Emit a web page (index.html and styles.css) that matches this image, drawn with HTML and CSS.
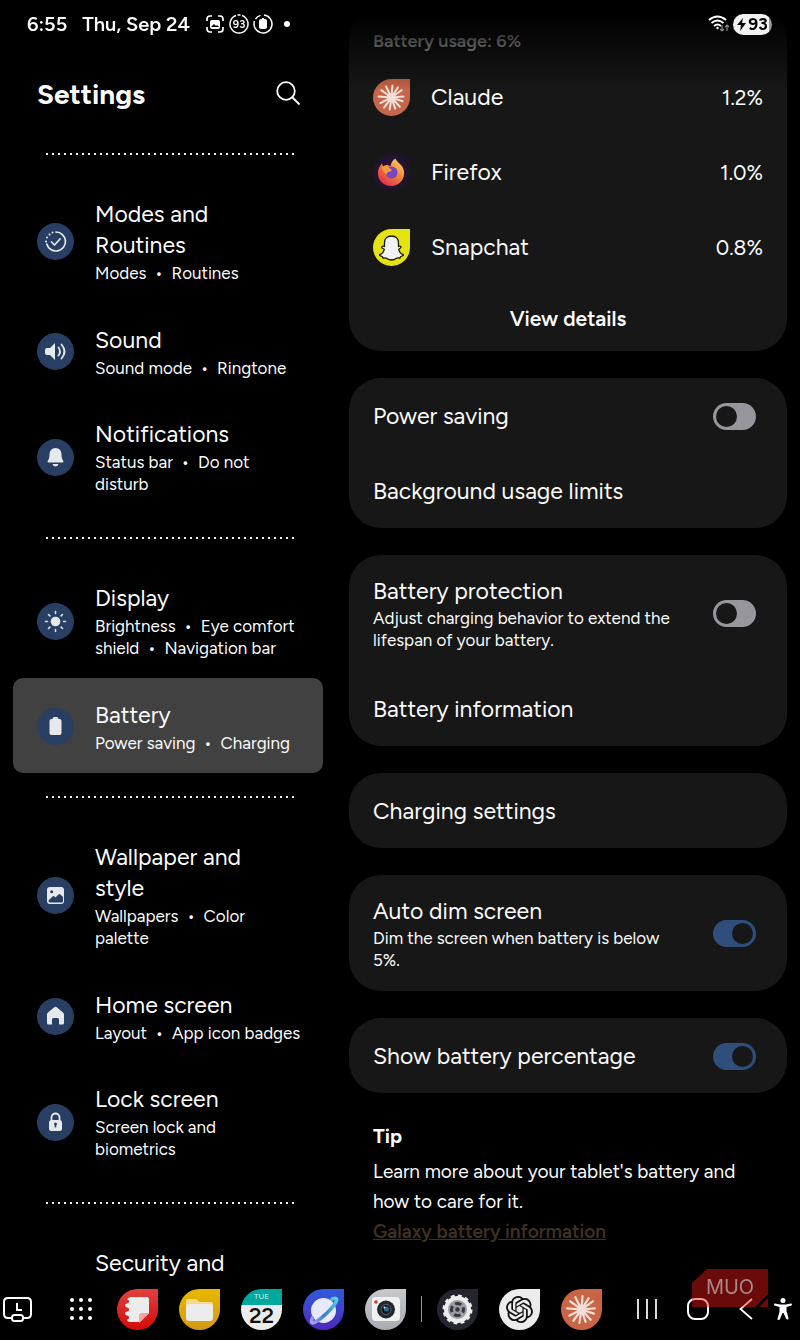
FILE: index.html
```html
<!DOCTYPE html>
<html lang="en">
<head>
    <meta charset="UTF-8">
    <meta name="viewport" content="width=device-width, initial-scale=1.0">
    <title>Settings</title>
    <link rel="stylesheet" href="styles.css">
</head>
<body>
    <!-- burst shared by the two Claude icons -->
    <svg class="defs" width="0" height="0" aria-hidden="true">
        <symbol id="burst" viewBox="0 0 40 40">
            <g stroke-width="2.2" stroke-linecap="round">
                <path d="M20 20 21 7M20 20 27 9M20 20 31 12M20 20 33 19M20 20 32 24M20 20 29 30M20 20 24 32M20 20 18 33M20 20 12 31M20 20 8 26M20 20 6 19M20 20 9 12M20 20 14 8"/>
            </g>
            <circle cx="20" cy="20" r="4"/>
        </symbol>
    </svg>

    <header class="status-bar">
        <span>6:55</span>
        <span class="date">Thu, Sep 24</span>
        <div class="status-icons">
            <svg width="20" height="20" viewBox="0 0 20 20" fill="none" stroke="#fff" stroke-width="1.7">
                <path d="M2 7V5q0-3 3-3h2M13 2h2q3 0 3 3v2M18 13v2q0 3-3 3h-2M7 18H5q-3 0-3-3v-2"/>
                <rect x="5" y="6" width="10" height="9" rx="2" fill="#fff" stroke="none"/>
                <path d="M6 13l3-3 2 2 1-1 2 2z" fill="#000" stroke="none"/>
            </svg>
            <svg width="20" height="20" viewBox="0 0 20 20" fill="none" stroke="#fff" stroke-width="1.5">
                <path d="M13 1.5a9 9 0 1 1-6 0M8.5 1.1h3"/>
                <text class="ring-text" x="10" y="14" text-anchor="middle">93</text>
            </svg>
            <svg width="20" height="20" viewBox="0 0 20 20" fill="none" stroke="#fff" stroke-width="1.5">
                <path d="M11 1a9 9 0 1 1-9.5 6M2.5 5a9 9 0 0 1 5-3.6"/>
                <path d="M8 5h1V4h2v1h1q2 0 2 2v6q0 2-2 2H8q-2 0-2-2V7q0-2 2-2z" fill="#fff" stroke="none"/>
            </svg>
        </div>
        <span class="more-dot"></span>
        <div class="status-right">
            <svg width="22" height="18" viewBox="0 0 22 18" fill="none" stroke="#fff" stroke-width="1.8">
                <path d="M1 5q8.500-7 17 0M3.500 8q6-5 12 0M6 11q3.500-3 7 0"/>
                <circle cx="9.5" cy="13" r="1.2" fill="#fff" stroke="none"/>
                <path d="M14 10v6M12 14l2 2 2-2M19 16v-6M17 12l2-2 2 2" stroke="#888" stroke-width="1.2"/>
            </svg>
            <span class="battery-pill">
                <svg width="9" height="13" viewBox="0 0 9 13"><path d="M6 0 0 7h4l-1 6 6-8H5z"/></svg>93
            </span>
        </div>
    </header>

    <div class="layout">
        <nav class="menu">
            <div class="menu-head">
                <h1>Settings</h1>
                <button class="search-btn" aria-label="Search">
                    <svg width="26" height="26" viewBox="0 0 26 26" fill="none" stroke="#fff" stroke-width="1.8">
                        <circle cx="11" cy="10" r="8.800"/><path d="M17.500 16.500 24.500 23.500"/>
                    </svg>
                </button>
            </div>
            <hr>
            <a class="menu-item" href="#modes">
                <svg class="icon" viewBox="0 0 37 37" fill="none" stroke="#e4e9f2" stroke-width="1.7" stroke-linecap="round" stroke-linejoin="round">
                    <path d="M19 9a9.500 9.500 0 1 1-9.200 12"/>
                    <path d="M14.500 19l3 3 5.500-6"/>
                    <path d="M9 18.500v.01M10 14.500v.01M12.500 11.500v.01M15.500 9.600v.01" stroke-width="2"/>
                </svg>
                <div>
                    <h2>Modes and<br>Routines</h2>
                    <p>Modes &nbsp;•&nbsp; Routines</p>
                </div>
            </a>
            <a class="menu-item" href="#sound">
                <svg class="icon" viewBox="0 0 37 37">
                    <path d="M10 15h3l5-5v17l-5-5h-3q-2 0-2-2v-3q0-2 2-2z" fill="#e6e8ee"/>
                    <path d="M21.500 14.500q3 4 0 8M24.500 11.500q6 7 0 14" fill="none" stroke="#e6e8ee" stroke-width="1.8" stroke-linecap="round"/>
                </svg>
                <div>
                    <h2>Sound</h2>
                    <p>Sound mode &nbsp;•&nbsp; Ringtone</p>
                </div>
            </a>
            <a class="menu-item" href="#notifications">
                <svg class="icon" viewBox="0 0 37 37" fill="#e6e8ee">
                    <path d="M18.500 9c4 0 6 3 6 6.500 0 3 .5 4.500 1.500 6 .8 1.200.5 2-.7 2H11.700c-1.200 0-1.500-.8-.7-2 1-1.500 1.500-3 1.500-6 0-3.500 2-6.500 6-6.500z"/>
                    <path d="M15.500 25h6q-.8 2.500-3 2.500t-3-2.500z"/>
                </svg>
                <div>
                    <h2>Notifications</h2>
                    <p>Status bar &nbsp;•&nbsp; Do not<br>disturb</p>
                </div>
            </a>
            <hr>
            <a class="menu-item" href="#display">
                <svg class="icon" viewBox="0 0 37 37">
                    <circle cx="18.500" cy="18.500" r="4.800" fill="#e6e8ee"/>
                    <path d="M18.500 8.500v2M18.500 26.500v2M8.500 18.500h2M26.500 18.500h2M11.500 11.500l1.400 1.400M24.100 24.100l1.400 1.400M11.500 25.500l1.400-1.400M24.100 12.900l1.400-1.400" stroke="#d5e3f5" stroke-width="1.6" stroke-linecap="round"/>
                </svg>
                <div>
                    <h2>Display</h2>
                    <p>Brightness &nbsp;•&nbsp; Eye comfort<br>shield &nbsp;•&nbsp; Navigation bar</p>
                </div>
            </a>
            <a class="menu-item active" href="#battery">
                <svg class="icon" viewBox="0 0 37 37">
                    <path d="M14.500 11h1q0-2 2-2h2q2 0 2 2h1q2 0 2 2v12q0 2-2 2h-8q-2 0-2-2v-12q0-2 2-2z" fill="#e6e8ee"/>
                </svg>
                <div>
                    <h2>Battery</h2>
                    <p>Power saving &nbsp;•&nbsp; Charging</p>
                </div>
            </a>
            <hr>
            <a class="menu-item" href="#wallpaper">
                <svg class="icon" viewBox="0 0 37 37">
                    <rect x="10" y="10" width="17" height="17" rx="3" fill="#e6e8ee"/>
                    <circle cx="14.700" cy="14.700" r="1.500" fill="#283f63"/>
                    <path d="M11.500 23.500l4-4q1-1 2 0l1 1 3-3q1-1 2 0l2.500 2.500v4q0 1.500-1.500 1.500h-11.500q-1.500 0-1.500-2z" fill="#283f63"/>
                </svg>
                <div>
                    <h2>Wallpaper and<br>style</h2>
                    <p>Wallpapers &nbsp;•&nbsp; Color<br>palette</p>
                </div>
            </a>
            <a class="menu-item" href="#home">
                <svg class="icon" viewBox="0 0 37 37">
                    <path d="M17.300 9.300q1.200-1 2.400 0l6.300 5.200q1 .8 1 2V25q0 1.500-1.500 1.500H22v-5q0-1.500-1.500-1.500h-4Q15 20 15 21.500v5h-3.500Q10 26.500 10 25v-8.500q0-1.200 1-2z" fill="#e6e8ee"/>
                </svg>
                <div>
                    <h2>Home screen</h2>
                    <p>Layout &nbsp;•&nbsp; App icon badges</p>
                </div>
            </a>
            <a class="menu-item" href="#lock">
                <svg class="icon" viewBox="0 0 37 37">
                    <rect x="12" y="16" width="13" height="11" rx="2.500" fill="#e6e8ee"/>
                    <path d="M14.500 16v-2.500a4 4 0 0 1 8 0V16" fill="none" stroke="#e6e8ee" stroke-width="1.8"/>
                    <path d="M18.500 20v3.500" stroke="#283f63" stroke-width="1.500"/><circle cx="18.500" cy="20" r="1.500" fill="#283f63"/>
                </svg>
                <div>
                    <h2>Lock screen</h2>
                    <p>Screen lock and<br>biometrics</p>
                </div>
            </a>
            <hr>
            <a class="menu-item no-icon" href="#security">
                <h2>Security and</h2>
            </a>
        </nav>

        <main class="details">
            <section class="card usage">
                <h3>Battery usage: 6%</h3>
                <div class="row app-row">
                    <svg class="app-icon claude" viewBox="0 0 40 40"><use href="#burst"/></svg>
                    <h2>Claude</h2>
                    <span class="value">1.2%</span>
                </div>
                <div class="row app-row">
                    <svg class="app-icon firefox" viewBox="0 0 37 37">
                        <defs>
                            <linearGradient id="ff" x1="1" y1="0" x2="0.300" y2="1">
                                <stop offset="0" stop-color="#ffdc72"/><stop offset=".5" stop-color="#f58a35"/><stop offset="1" stop-color="#df304d"/>
                            </linearGradient>
                        </defs>
                        <path d="M22.500 4.500c1 3.500 5 5 7 8.500 5 9-2 19-11 19C10 32 4.500 26 5 18.500c.2-3.500 1.500-6.500 4-9l1 3q2-2 4.500-1.500 1.500 0 3 1.500 1-6 5-8z" fill="url(#ff)"/>
                        <circle cx="18.500" cy="18.500" r="6" fill="#7545c4"/>
                        <path d="M9 13q4-2 6 0l4 3q-1 2-4 2-2 1-1 3-4-3-5-8z" fill="#f69b3a"/>
                    </svg>
                    <h2>Firefox</h2>
                    <span class="value">1.0%</span>
                </div>
                <div class="row app-row">
                    <svg class="app-icon snapchat" viewBox="0 0 37 37">
                        <path d="M18.500 7c4 0 7 2.500 7 7v3.500q1.500-.7 2.500.3.500 1-2.300 2.500c.8 3 2.300 4.700 4.500 5.200q1 1-2.500 2l-.7 1.600q-2.500-.5-4 .4-2 1.500-4.500 1.500t-4.500-1.500q-1.500-.9-4-.4L9.300 27.500q-3.500-1-2.500-2c2.200-.5 3.700-2.200 4.500-5.200-2.800-1.500-2.800-1.500-2.300-2.500q1-1 2.500-.3V14c0-4.500 3-7 7-7z" fill="#f2f2f2" stroke="#161605" stroke-width="1.300" stroke-linejoin="round"/>
                    </svg>
                    <h2>Snapchat</h2>
                    <span class="value">0.8%</span>
                </div>
                <button class="view-btn">View details</button>
            </section>

            <section class="card">
                <label class="row">
                    <span class="title">Power saving</span>
                    <input class="toggle" type="checkbox">
                </label>
                <div class="row"><span class="title">Background usage limits</span></div>
            </section>

            <section class="card">
                <label class="row">
                    <span class="text">
                        <span class="title">Battery protection</span>
                        <span class="desc">Adjust charging behavior to extend the<br>lifespan of your battery.</span>
                    </span>
                    <input class="toggle" type="checkbox">
                </label>
                <div class="row"><span class="title">Battery information</span></div>
            </section>

            <section class="card">
                <div class="row"><span class="title">Charging settings</span></div>
            </section>

            <section class="card">
                <label class="row">
                    <span class="text">
                        <span class="title">Auto dim screen</span>
                        <span class="desc">Dim the screen when battery is below<br>5%.</span>
                    </span>
                    <input class="toggle" type="checkbox" checked>
                </label>
            </section>

            <section class="card">
                <label class="row">
                    <span class="title">Show battery percentage</span>
                    <input class="toggle" type="checkbox" checked>
                </label>
            </section>

            <section class="tip">
                <h3>Tip</h3>
                <p>Learn more about your tablet's battery and<br>how to care for it.</p>
                <a href="#info">Galaxy battery information</a>
            </section>
        </main>
    </div>

    <footer class="taskbar">
        <div class="group tools">
            <button aria-label="Recent tasks">
                <svg width="30" height="28" viewBox="0 0 30 28" fill="none" stroke="#fff" stroke-width="2">
                    <path d="M9 23H6q-4 0-4-4V7q0-4 4-4h19q4 0 4 4v12q0 4-4 4h-3"/>
                    <rect x="10" y="20" width="11" height="6" rx="2.500"/>
                    <path d="M15 8v7h5"/>
                </svg>
            </button>
            <button aria-label="All apps">
                <svg width="22" height="22" viewBox="0 0 22 22" stroke="#fff" stroke-width="4" stroke-linecap="round">
                    <path d="M2 2h.01M11 2h.01M20 2h.01M2 11h.01M11 11h.01M20 11h.01M2 20h.01M11 20h.01M20 20h.01"/>
                </svg>
            </button>
        </div>
        <div class="group apps">
            <button class="dock-icon notes" aria-label="Notes">
                <svg viewBox="0 0 41 41">
                    <path d="M14 8h16q2 0 2 2v14l-9 9H13q-3 0-3-2.500a2 2 0 0 0 0-4 2 2 0 0 1 0-4 2 2 0 0 0 0-4 2 2 0 0 1 0-4 2 2 0 0 0 0-4Q11 8 14 8z" fill="#ececec"/>
                    <path d="M32 24l-10 10v-7q0-3 3-3z" fill="#f5a4a0"/>
                </svg>
            </button>
            <button class="dock-icon files" aria-label="My Files">
                <svg viewBox="0 0 41 41">
                    <path d="M7 17v-5q0-2 2-2h8l4 3h11q2 0 2 2v3z" fill="#f7d98a"/>
                    <rect x="7" y="15" width="27" height="17" rx="3" fill="#ececec"/>
                </svg>
            </button>
            <button class="dock-icon calendar" aria-label="Calendar">
                <span class="day">TUE</span>
                <span class="num">22</span>
            </button>
            <button class="dock-icon internet" aria-label="Internet">
                <svg viewBox="0 0 41 41">
                    <defs>
                        <linearGradient id="orbit" x1="0" y1="0" x2="1" y2="0">
                            <stop offset="0" stop-color="#a9a0ef"/><stop offset=".4" stop-color="#347bd6"/><stop offset="1" stop-color="#58d0dc"/>
                        </linearGradient>
                    </defs>
                    <circle cx="20.500" cy="21.500" r="12.500" fill="#e6e9fa"/>
                    <g transform="rotate(-44 20.500 21)">
                        <path d="M7 19q-5 2-3 4 4 2.500 16.500 2.500T37 23q2-2-3-4" fill="none" stroke="url(#orbit)" stroke-width="3.500" stroke-linecap="round"/>
                    </g>
                </svg>
            </button>
            <button class="dock-icon camera" aria-label="Camera">
                <svg viewBox="0 0 41 41">
                    <rect x="7" y="8" width="28" height="24" rx="4" fill="#f1f1f1"/>
                    <circle cx="11" cy="13" r="1.800" fill="#cf3b2f"/>
                    <circle cx="21" cy="20.500" r="9" fill="#24282c"/>
                    <circle cx="21" cy="20.500" r="5" fill="#11161c" stroke="#5b6870"/>
                    <circle cx="21.500" cy="20" r="2.500" fill="#35688e"/><circle cx="19.500" cy="18.500" r="1" fill="#cde"/>
                </svg>
            </button>
            <span class="divider"></span>
            <button class="dock-icon gear" aria-label="Settings">
                <svg viewBox="0 0 41 41">
                    <circle cx="20.500" cy="20.500" r="13.500" fill="none" stroke="#ececec" stroke-width="3" stroke-dasharray="3.800 3.269"/>
                    <circle cx="20.500" cy="20.500" r="11.500" fill="#9b9da3" stroke="#ececec" stroke-width="4"/>
                    <circle cx="20.500" cy="20.500" r="6" fill="none" stroke="#343740" stroke-width="3" stroke-dasharray="6.400 3.025" stroke-dashoffset="3.200"/>
                    <circle cx="20.500" cy="20.500" r="2.200" fill="#343740"/>
                </svg>
            </button>
            <button class="dock-icon gpt" aria-label="ChatGPT">
                <svg width="27" height="27" viewBox="0 0 24 24" fill="#111">
                    <path d="M22.2819 9.8211a5.9847 5.9847 0 0 0-.5157-4.9108 6.0462 6.0462 0 0 0-6.5098-2.9A6.0651 6.0651 0 0 0 4.9807 4.1818a5.9847 5.9847 0 0 0-3.9977 2.9 6.0462 6.0462 0 0 0 .7427 7.0966 5.98 5.98 0 0 0 .511 4.9107 6.051 6.051 0 0 0 6.5146 2.9001A5.9847 5.9847 0 0 0 13.2599 24a6.0557 6.0557 0 0 0 5.7718-4.2058 5.9894 5.9894 0 0 0 3.9977-2.9001 6.0557 6.0557 0 0 0-.7475-7.0729zm-9.022 12.6081a4.4755 4.4755 0 0 1-2.8764-1.0408l.1419-.0804 4.7783-2.7582a.7948.7948 0 0 0 .3927-.6813v-6.7369l2.02 1.1686a.071.071 0 0 1 .038.052v5.5826a4.504 4.504 0 0 1-4.4945 4.4944zm-9.6607-4.1254a4.4708 4.4708 0 0 1-.5346-3.0137l.142.0852 4.783 2.7582a.7712.7712 0 0 0 .7806 0l5.8428-3.3685v2.3324a.0804.0804 0 0 1-.0332.0615L9.74 19.9502a4.4992 4.4992 0 0 1-6.1408-1.6464zM2.3408 7.8956a4.485 4.485 0 0 1 2.3655-1.9728V11.6a.7664.7664 0 0 0 .3879.6765l5.8144 3.3543-2.0201 1.1685a.0757.0757 0 0 1-.071 0l-4.8303-2.7865A4.504 4.504 0 0 1 2.3408 7.872zm16.5963 3.8558L13.1038 8.364 15.1192 7.2a.0757.0757 0 0 1 .071 0l4.8303 2.7913a4.4944 4.4944 0 0 1-.6765 8.1042v-5.6772a.79.79 0 0 0-.407-.667zm2.0107-3.0231l-.142-.0852-4.7735-2.7818a.7759.7759 0 0 0-.7854 0L9.409 9.2297V6.8974a.0662.0662 0 0 1 .0284-.0615l4.8303-2.7866a4.4992 4.4992 0 0 1 6.6802 4.66zM8.3065 12.863l-2.02-1.1638a.0804.0804 0 0 1-.038-.0567V6.0742a4.4992 4.4992 0 0 1 7.3757-3.4537l-.142.0805L8.704 5.459a.7948.7948 0 0 0-.3927.6813zm1.0976-2.3654l2.602-1.4998 2.6069 1.4998v2.9994l-2.5974 1.4997-2.6067-1.4997z"/>
                </svg>
            </button>
            <button class="dock-icon claude" aria-label="Claude">
                <svg viewBox="0 0 40 40"><use href="#burst"/></svg>
            </button>
        </div>
        <div class="group system">
            <button aria-label="Recents">
                <svg width="20" height="22" viewBox="0 0 20 22" stroke="#fff" stroke-width="1.7"><path d="M1 1v20M10 1v20M19 1v20"/></svg>
            </button>
            <button aria-label="Home">
                <svg width="22" height="22" viewBox="0 0 22 22" fill="none" stroke="#fff" stroke-width="2"><rect x="1" y="1" width="20" height="20" rx="7"/></svg>
            </button>
            <button aria-label="Back">
                <svg width="14" height="22" viewBox="0 0 14 22" fill="none" stroke="#fff" stroke-width="1.8"><path d="M13 1 1.500 11 13 21"/></svg>
            </button>
            <button aria-label="Accessibility">
                <svg width="18" height="22" viewBox="0 0 18 22" fill="#fff">
                    <circle cx="9" cy="2.500" r="2.500"/>
                    <path d="M1 5.500l5 1h6l5-1q1 0 1 1t-1 1.300l-4.500 1.200v4l2 7q.2 1.500-1 1.500t-1.500-1L9.500 15h-1L6 21q-.4 1-1.600 1t-.9-1.500l2-6.500v-5L1 7.800Q0 7.500 0 6.500t1-1z"/>
                </svg>
            </button>
        </div>
        <div class="brand">MUO</div>
    </footer>
</body>
</html>
```
FILE: styles.css
```css
* {
    box-sizing: border-box;
}

body {
    margin: 0;
    min-height: 100vh;
    background-color: #000;
    color: #fafafa;
    font-family: Figtree, Roboto, "Liberation Sans", sans-serif;
    font-size: 17px;
    line-height: 22px;
}

h1, h2, h3, p {
    margin: 0;
}

button {
    padding: 0;
    border: none;
    background: none;
    color: inherit;
    font-family: inherit;
    cursor: pointer;
}

svg {
    display: block;
}

a {
    color: inherit;
    text-decoration: none;
}

.defs {
    position: absolute;
}

/* Status bar, stays above the scrolled content */
.status-bar {
    position: fixed;
    top: 0;
    left: 0;
    right: 0;
    z-index: 2;
    display: flex;
    align-items: center;
    height: 48px;
    padding: 0 28px 0 27px;
    font-size: 20px;
    font-weight: 600;
}

.date {
    margin-left: 15px;
}

.status-icons {
    display: flex;
    gap: 4px;
    margin-left: 15px;
}

.ring-text {
    fill: #fff;
    stroke: none;
    font-size: 11px;
}

.more-dot {
    width: 6px;
    height: 6px;
    margin-left: 11px;
    border-radius: 50%;
    background-color: #fff;
}

.status-right {
    display: flex;
    align-items: center;
    gap: 3px;
    margin-left: auto;
}

.battery-pill {
    display: flex;
    align-items: center;
    justify-content: center;
    gap: 2px;
    width: 39px;
    height: 21px;
    border-radius: 11px;
    background: linear-gradient(90deg, #f2f2f2 93%, #999 93%);
    color: #000;
    font-size: 17px;
    font-weight: 700;
}

/* Two panes */
.layout {
    display: grid;
    grid-template-columns: 310fr 438fr;
    gap: 26px;
    padding: 0 13px;
}

.menu-head {
    display: flex;
    align-items: center;
    justify-content: space-between;
    height: 130px;
    padding: 58px 22px 0 24px;
}

h1 {
    font-size: 28px;
    line-height: 36px;
    font-weight: 700;
}

hr {
    height: 48px;
    margin: 0 28px 0 33px;
    border: none;
    background: repeating-linear-gradient(90deg, #eee 0 2px, transparent 2px 6px) center / 100% 2px no-repeat;
}

.menu-item {
    display: flex;
    align-items: center;
    gap: 21px;
    min-height: 95px;
    padding: 21px 10px 19px 24px;
    border-radius: 10px;
}

.menu-item p {
    margin-top: 1px;
}

.menu-item.active {
    background-color: #414141;
}

.menu-item.no-icon {
    min-height: 0;
    padding-left: 82px;
}

.icon {
    flex: none;
    width: 37px;
    height: 37px;
    border-radius: 50%;
    background-color: #283f63;
}

h2, .title {
    font-size: 23px;
    line-height: 31px;
    font-weight: 400;
}

.card {
    margin-bottom: 27px;
    border-radius: 32px;
    background-color: #171717;
}

.usage {
    position: relative;
    margin-top: 8px;
    padding-top: 22px;
}

/* fades the list out under the status bar */
.usage::after {
    content: "";
    position: absolute;
    top: -8px;
    left: 0;
    right: 0;
    height: 90px;
    background: linear-gradient(#000 14px, transparent);
}

.usage h3 {
    margin-bottom: 8px;
    padding: 0 24px;
    color: #d0d0d0;
    font-size: 18px;
    font-weight: 600;
}

.row {
    display: flex;
    align-items: center;
    min-height: 75px;
    padding: 21px 31px 20px 24px;
}

.app-row {
    gap: 21px;
    padding: 19px 24px;
}

.value {
    margin-left: auto;
    font-size: 21px;
}

.app-icon {
    width: 37px;
    height: 37px;
    border-radius: 50% 0 50% 50%;
}

.claude {
    background-color: #c56549;
    fill: #f3dfd8;
    stroke: #f3dfd8;
}

.firefox {
    background: radial-gradient(circle, #3c1048, #1b1426 75%);
}

.snapchat {
    background-color: #e6e312;
}

.view-btn {
    display: block;
    width: 100%;
    height: 66px;
    font-size: 21px;
    font-weight: 600;
}

.text, .text .title, .desc {
    display: block;
}

.toggle {
    appearance: none;
    display: flex;
    flex: none;
    width: 43px;
    height: 27px;
    margin: 0 0 0 auto;
    padding: 3px;
    border-radius: 14px;
    background-color: #96969c;
    cursor: pointer;
}

.toggle::before {
    content: "";
    width: 21px;
    height: 21px;
    border-radius: 50%;
    background-color: #171717;
}

.toggle:checked {
    justify-content: flex-end;
    background-color: #2f4e7c;
}

.tip {
    padding: 1px 24px 0;
    font-size: 19px;
    line-height: 30px;
}

.tip h3 {
    margin-bottom: 6px;
    font-size: 20px;
    font-weight: 700;
}

.tip a {
    color: #403023;
    font-weight: 600;
    text-decoration: underline;
}

/* Taskbar */
.taskbar {
    position: fixed;
    bottom: 0;
    left: 0;
    right: 0;
    display: flex;
    align-items: center;
    justify-content: space-between;
    height: 62px;
    padding: 0 8px 0 2px;
    background-color: #000;
}

.group {
    display: flex;
    align-items: center;
}

.tools {
    gap: 38px;
}

.apps {
    gap: 21px;
}

.system {
    gap: 30px;
    padding-left: 10px;
}

.system button:last-child {
    margin-left: -9px;
}

.divider {
    width: 1px;
    height: 26px;
    margin: 0 -6px;
    background-color: #999;
}

.dock-icon {
    width: 41px;
    height: 41px;
    overflow: hidden;
    border-radius: 50% 0 50% 50%;
}

.notes {
    background: linear-gradient(#e0413f, #d40a0a);
}

.files {
    background: linear-gradient(#e8b800, #d39a13);
}

.calendar {
    display: flex;
    flex-direction: column;
    align-items: center;
    background: linear-gradient(#00a99d 16px, #ececec 16px);
    color: #111;
}

.day {
    color: #d8f3f0;
    font-size: 8px;
    line-height: 15px;
}

.num {
    font-size: 22px;
    line-height: 23px;
    font-weight: 600;
}

.internet {
    background: linear-gradient(#2f5bdc, #4f28bc);
}

.camera {
    background: linear-gradient(#c6c8cc, #a9acb2);
}

.gear {
    background-color: #25252e;
}

.gpt {
    display: flex;
    align-items: center;
    justify-content: center;
    background-color: #ececec;
}

.dock-icon.claude {
    background-color: #c96444;
}

/* Publisher tag over the corner of the taskbar */
.brand {
    position: absolute;
    right: 32px;
    bottom: 33px;
    width: 76px;
    height: 38px;
    background-color: rgba(235, 25, 20, 0.45);
    clip-path: polygon(0 14px, 15px 0, 100% 0, 100% 25px, 63px 100%, 67px 100%, 100% 29px, 100% 100%, 67px 100%, 63px 100%, 0 100%);
    color: #a88;
    font-family: Inter, sans-serif;
    font-size: 20px;
    line-height: 37px;
    font-weight: 400;
    text-align: center;
}
```
